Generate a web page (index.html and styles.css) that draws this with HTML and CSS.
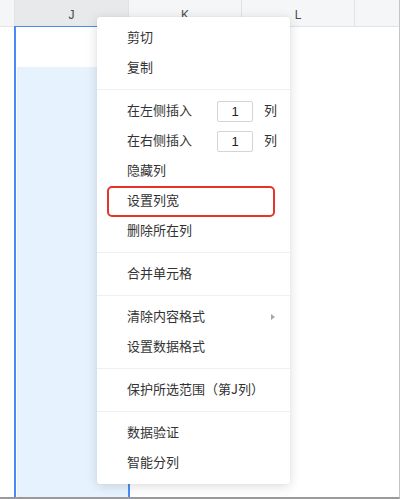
FILE: index.html
```html
<!DOCTYPE html>
<html lang="zh-CN">
<head>
<meta charset="utf-8">
<link rel="stylesheet" href="styles.css">
</head>
<body>
<div class="sheet">
  <div class="header">
    <div class="hcell corner"></div>
    <div class="hcell col-j sel">J</div>
    <div class="hcell col-k">K</div>
    <div class="hcell col-l">L</div>
    <div class="hcell last"></div>
  </div>
  <div class="grid">
    <div class="gap"></div>
    <div class="col-sel">
      <div class="active"></div>
      <div class="fill"></div>
    </div>
  </div>
  <div class="menu">
    <div class="group">
      <div class="item">剪切</div>
      <div class="item">复制</div>
    </div>
    <div class="group">
      <div class="item insert"><span class="label">在左侧插入</span><span class="num">1</span><span class="unit">列</span></div>
      <div class="item insert"><span class="label">在右侧插入</span><span class="num">1</span><span class="unit">列</span></div>
      <div class="item">隐藏列</div>
      <div class="item">设置列宽</div>
      <div class="item">删除所在列</div>
    </div>
    <div class="group">
      <div class="item">合并单元格</div>
    </div>
    <div class="group">
      <div class="item sub">清除内容格式<span class="arrow"></span></div>
      <div class="item">设置数据格式</div>
    </div>
    <div class="group">
      <div class="item">保护所选范围（第J列）</div>
    </div>
    <div class="group">
      <div class="item">数据验证</div>
      <div class="item">智能分列</div>
    </div>
    <div class="highlight"></div>
  </div>
</div>
</body>
</html>
```
FILE: styles.css
```css
* { box-sizing: border-box; }
html, body { margin: 0; padding: 0; background: #fff; }
body { font-family: "Noto Sans CJK SC", "Noto Sans", sans-serif; }

.sheet {
  position: relative;
  width: 400px;
  height: 499px;
  overflow: hidden;
  border-right: 1px solid #c4c4c4;
  border-bottom: 2px solid #9a9a9a;
  display: flex;
  flex-direction: column;
}

.header {
  display: flex;
  height: 27px;
  flex: none;
  background: #f5f6f7;
  border-bottom: 1px solid #e2e3e5;
}
.hcell {
  height: 100%;
  border-right: 1px solid #e2e3e5;
  display: flex;
  align-items: center;
  justify-content: center;
  font-family: "Liberation Sans", Arial, sans-serif;
  font-size: 12px;
  color: #4a4a4a;
  padding-top: 3px;
}
.corner { width: 15px; }
.col-j { width: 114px; }
.col-k { width: 113px; }
.col-l { width: 113px; }
.last { flex: 1; border-right: none; }
.sel { background: #e8e9eb; }

.grid {
  flex: 1;
  display: flex;
  margin-top: -1px;
}
.gap { width: 14px; flex: none; }
.col-sel {
  width: 116px;
  flex: none;
  border: 2px solid #4b89f6;
  border-top-width: 1px;
  border-bottom: none;
  display: flex;
  flex-direction: column;
}
.active { height: 40px; background: #fff; flex: none; }
.fill { flex: 1; background: #e6f2fe; margin-left: 1px; }

.menu {
  position: absolute;
  left: 97px;
  top: 17px;
  width: 193px;
  background: #fff;
  border-radius: 3px;
  box-shadow: 0 2px 12px rgba(0, 0, 0, 0.14), 0 0 2px rgba(0, 0, 0, 0.06);
}
.group { padding: 6px 0; }
.group + .group { border-top: 1px solid #efefef; }
.item {
  height: 30px;
  padding-left: 30px;
  padding-bottom: 4px;
  display: flex;
  align-items: center;
  font-size: 13px;
  color: #333;
  white-space: nowrap;
}
.insert { padding-bottom: 0; }
.insert .label { width: 90px; padding-bottom: 4px; }
.insert .unit { padding-bottom: 4px; }
.num {
  width: 36px;
  height: 21px;
  border: 1px solid #d4d4d4;
  border-radius: 2px;
  display: flex;
  align-items: center;
  justify-content: center;
  font-family: "Liberation Sans", Arial, sans-serif;
  font-size: 13px;
  color: #222;
}
.unit { margin-left: 11px; }
.sub { position: relative; }
.arrow {
  position: absolute;
  left: 174px;
  top: 12px;
  width: 0;
  height: 0;
  border-top: 3.5px solid transparent;
  border-bottom: 3.5px solid transparent;
  border-left: 4px solid #a8a8a8;
}
.highlight {
  position: absolute;
  left: 10px;
  top: 169px;
  width: 168px;
  height: 31px;
  border: 2px solid #e5352b;
  border-radius: 5px;
}
```
